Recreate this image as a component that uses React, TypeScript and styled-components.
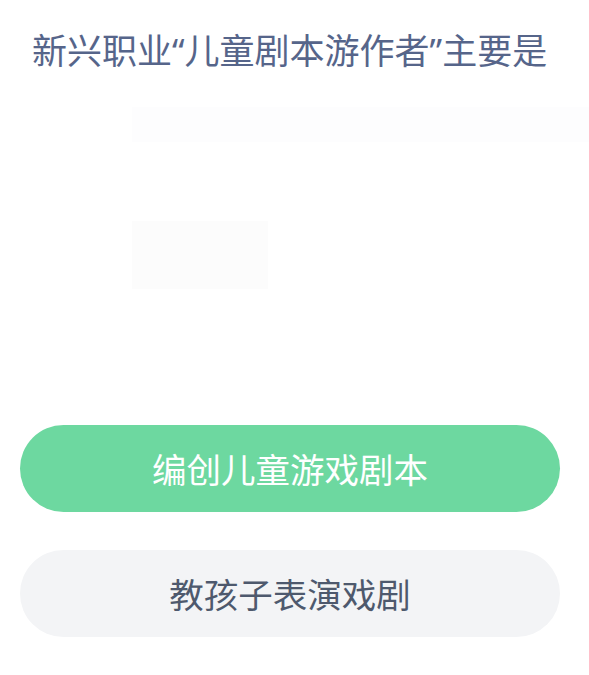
import React from "react";
import styled, { createGlobalStyle } from "styled-components";

const GlobalStyle = createGlobalStyle`
  html, body {
    margin: 0;
    padding: 0;
    background: #ffffff;
  }
  body {
    font-family: "Noto Sans CJK SC", "Noto Sans", sans-serif;
  }
`;

const Page = styled.div`
  width: 589px;
  height: 675px;
  display: flex;
  flex-direction: column;
  background: #ffffff;
  overflow: hidden;
`;

const Title = styled.h1`
  margin: 0;
  padding: 27px 0 0 32px;
  font-family: "Noto Sans", "Noto Sans CJK SC", sans-serif;
  font-weight: 400;
  font-size: 35px;
  line-height: 47px;
  color: #56658a;
  white-space: nowrap;
`;

const Media = styled.div`
  height: 351px;
  padding: 33px 0 0 132px;
  box-sizing: border-box;
  display: flex;
  flex-direction: column;
`;

const Band = styled.div`
  height: 35px;
  background: #fdfdfe;
`;

const Thumb = styled.div`
  margin-top: 79px;
  width: 136px;
  height: 68px;
  background: #fcfcfc;
`;

const Options = styled.div`
  display: flex;
  flex-direction: column;
  gap: 38px;
  padding: 0 29px 0 20px;
`;

const Option = styled.button<{ $correct?: boolean }>`
  height: 87px;
  border: none;
  border-radius: 44px;
  display: flex;
  align-items: center;
  justify-content: center;
  padding: 0 0 2px;
  font-family: "Noto Sans CJK SC", sans-serif;
  font-size: 34.5px;
  font-weight: 400;
  background: ${(p) => (p.$correct ? "#6dd8a0" : "#f3f4f6")};
  color: ${(p) => (p.$correct ? "#ffffff" : "#4e596d")};
`;

export default function App() {
  return (
    <>
      <GlobalStyle />
      <Page>
        <Title>新兴职业“儿童剧本游作者”主要是</Title>
        <Media>
          <Band />
          <Thumb />
        </Media>
        <Options>
          <Option $correct>编创儿童游戏剧本</Option>
          <Option>教孩子表演戏剧</Option>
        </Options>
      </Page>
    </>
  );
}
